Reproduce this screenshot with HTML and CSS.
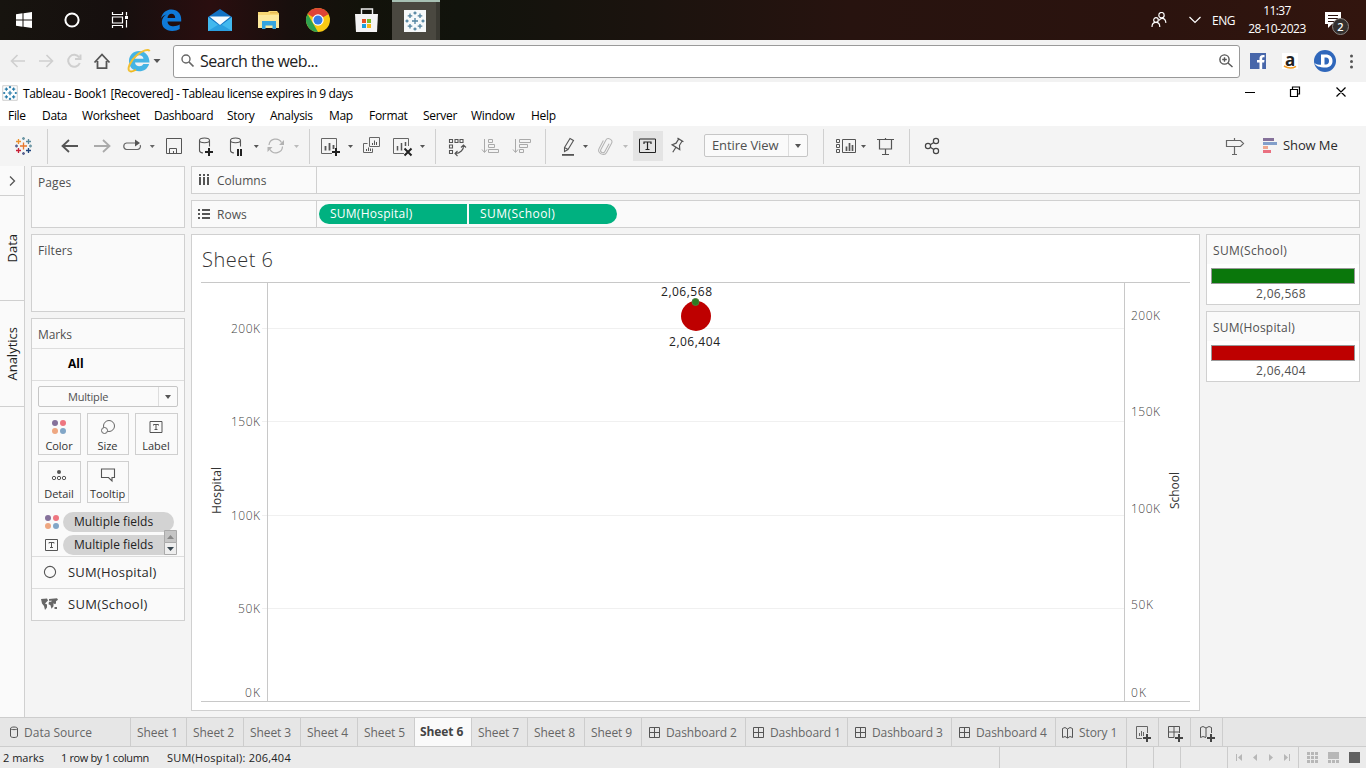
FILE: index.html
```html
<!DOCTYPE html>
<html lang="en">
<head>
<meta charset="utf-8">
<title>Tableau - Book1</title>
<link rel="stylesheet" href="styles.css">
</head>
<body>
<svg class="defs" width="0" height="0">
  <defs>
    <g id="spark"><path d="M0-3V3M-3 0H3M0-9.500V-6.500M-1.500-8H1.500M0 6.500V9.500M-1.500 8H1.500M-9.500 0H-6.500M-8-1.500V1.500M6.500 0H9.500M8-1.500V1.500M-5-7.500V-3M-7.300-5.200H-2.700M5-7.500V-3M2.700-5.200H7.300M-5 3V7.500M-7.300 5.200H-2.700M5 3V7.500M2.700 5.200H7.300"/></g>
    <g id="grid"><path d="M.5.5h10v10H.5zM5.500.5v10M.5 5.500h10" fill="none" stroke="#555"/></g>
    <g id="book"><path d="M.5 1.500 3 .5 5.500 2 8 .5l2.500 1v9L8 9.500 5.500 11 3 9.500.5 10.500zM5.500 2v9" fill="none" stroke="#555"/></g>
    <g id="dots4"><circle cx="-4" cy="-4" r="3" fill="#85719a"/><circle cx="4" cy="-4" r="3" fill="#ee7680"/><circle cx="-4" cy="4" r="3" fill="#eea781"/><circle cx="4" cy="4" r="3" fill="#82a6c7"/></g>
    <g id="tbox" fill="none" stroke="#555"><path d="M-6.500-5.500H5.500V5.500H-6.500zM-3-1.500V-2.500H2V-1.500M-.5-2.500V2.500M-2 2.500H1"/></g>
  </defs>
</svg>

<header class="taskbar">
  <svg width="392" height="40" viewBox="0 0 392 40">
    <path fill="#fff" d="M16 14.300 22.500 13.300V19.500H16zM23.500 13.200 32 12V19.500H23.500zM16 20.500H22.500V26.700L16 25.700zM23.500 20.500H32V28L23.500 26.800z"/>
    <circle cx="72" cy="20" r="6.600" fill="none" stroke="#fff" stroke-width="2"/>
    <path fill="none" stroke="#fff" stroke-width="1.200" d="M112.500 12v2.500h10V12M112.500 28v-2.500h10V28M112.500 17h10v6h-10zM126.500 12v3.500M126.500 20v7.500"/><path d="M125 16h3v3h-3z" fill="#fff"/>
    <path fill="#0f7ad8" d="M161 18.500C162.500 12 167 9.500 171.500 9.500c5.500 0 9.700 4 9.700 9.500v2.500H167.500c.2 3.300 3 4.800 6 4.800 2.300 0 4.500-.6 6.200-1.700V29c-2 1.200-4.500 1.900-7.500 1.900-6.500 0-10.700-3.900-10.300-9.400.3-3 2-5.700 5-7.200-2.500.6-4.600 2.200-5.900 4.200zM167.500 18h7.700c0-2.600-1.300-4.200-3.700-4.200-2.300 0-3.800 1.800-4 4.200z"/>
    <path fill="#1272c4" d="M208 17 220 9l12 8v14h-24z"/><path fill="#f5fbff" d="M209.500 16.500h21L220 25z"/><path fill="#42b8ee" d="M208 17l12 9 12-9v14h-24z"/><path fill="#2b9fe0" d="M208 31 218.500 24.500 220 26l1.500-1.500L232 31z"/>
    <path fill="#f8d775" d="M258 12h10l1-1h8l2 2.500V28h-21z"/><path fill="#e8bb55" d="M270 12h8v1.500h-8z"/><path fill="#fde89d" d="M258 15h21v13h-21z"/><path fill="#37a5df" d="M262 21h14v8h-3.500v-3.500h-7V29H262z"/>
    <circle cx="318" cy="20" r="12" fill="#f8c913"/><path fill="#dd4436" d="M318 20 307.600 14a12 12 0 0 1 20.800 0z"/><path fill="#dd4436" d="M318 14h10.400L318 20z"/><path fill="#2fa24f" d="M307.600 14 318 32a12 12 0 0 1-10.400-18z"/><circle cx="318" cy="20" r="5.700" fill="#fff"/><circle cx="318" cy="20" r="4.500" fill="#337de5"/>
    <path fill="none" stroke="#ededed" stroke-width="1.400" d="M361.500 15V9h11v6"/><path fill="#f3f3f3" d="M355 14h23l-1 18h-21z"/><path fill="#e65124" d="M362 19h4v4h-4z"/><path fill="#78b82a" d="M367 19h4v4h-4z"/><path fill="#18a0de" d="M362 24h4v4h-4z"/><path fill="#f6b713" d="M367 24h4v4h-4z"/>
  </svg>
  <div class="active-app"><svg width="22" height="22" viewBox="-11 -11 22 22"><path fill="#f6f9fa" d="M-11-11h22v22h-22z"/><use href="#spark" stroke="#4f829f" stroke-width="1.300"/></svg></div>
  <div class="tray">
    <svg class="people" width="16" height="16" viewBox="0 0 16 16" fill="none" stroke="#fff" stroke-width="1.200"><circle cx="5" cy="8" r="2.300"/><path d="M1 15c0-3 1.500-4.600 4-4.600s3.800 1.600 3.800 4.600"/><circle cx="10.500" cy="3.200" r="2.700"/><path d="M8 8.500c.8-1.600 1.700-2.200 3-2.200 2.300 0 3.700 1.700 3.900 4.600"/></svg>
    <svg class="chev" width="12" height="8" viewBox="0 0 12 8"><path d="M.5 1 6 6.500 11.500 1" fill="none" stroke="#fff" stroke-width="1.200"/></svg>
    <span class="lang">ENG</span>
    <div class="clock"><span class="time">11:37</span><span class="date">28-10-2023</span></div>
    <div class="notif"><svg width="18" height="17" viewBox="0 0 18 17"><path fill="#fff" d="M1 1h16v12H8l-4 4v-4H1z"/><path stroke="#29120e" d="M4 4.500h10M4 7.500h10M4 10.500h7"/></svg><span class="badge">2</span></div>
  </div>
</header>

<div class="browserbar">
  <svg width="173" height="42" viewBox="0 40 173 42">
    <g fill="none" stroke="#cfcfcf" stroke-width="1.600"><path d="M25 61H12M17.500 55 11.500 61l6 6M39 61h13M46.500 55l6 6-6 6"/><path stroke-width="2" d="M79.200 57.500a6 6 0 1 0 .6 5.500M80.500 54.500v4.500H75"/></g>
    <path fill="none" stroke="#555" stroke-width="1.800" d="M94.500 62.500 102 54.500l7.500 8M97.500 61v7.200H106.500V61"/>
    <path fill="#45b4e4" d="M129 61c0-6 4.500-10 10-10 6 0 10.500 4.500 10.500 11.500H135c.3 2.500 2 3.700 4.300 3.700 2 0 3.200-.7 4-2.200h5.800c-1.500 4.700-5 7.300-10 7.300-6 0-10.100-4.300-10.100-10.300zM135 58.800h8.500c-.3-2.200-1.800-3.500-4.200-3.500s-4 1.300-4.300 3.500z"/>
    <path d="M129.500 71c-2.500-2 .5-10 7-15.500 6-5.300 12.500-7 13-4.300" fill="none" stroke="#f2c033" stroke-width="2"/><path d="M129.500 71c1.500 1 4 .3 6.500-1.200" fill="none" stroke="#efb91d" stroke-width="1.800"/>
    <path d="M153.500 59h7l-3.500 4z" fill="#555"/>
  </svg>
  <div class="search">
    <svg width="14" height="14" viewBox="0 0 14 14"><circle cx="5" cy="5" r="4" fill="none" stroke="#666" stroke-width="1.400"/><path d="M8 8l4.500 4.500" stroke="#666" stroke-width="1.700"/></svg>
    <span class="search-text">Search the web...</span>
    <svg class="zoomer" width="14" height="14" viewBox="0 0 14 14"><circle cx="5.500" cy="5.500" r="4.600" fill="none" stroke="#555" stroke-width="1.400"/><path d="M9 9l4.500 4M3.200 5.500h4.600M5.500 3.200v4.600" stroke="#555" stroke-width="1.400"/></svg>
  </div>
  <svg width="126" height="42" viewBox="1240 40 126 42">
    <path fill="#4867aa" d="M1250 53h16v16h-16z"/><path fill="#fff" d="M1259.500 69v-6.500H1257V60h2.500v-1.500c0-2.700 1.500-4 5-3.500v2.300c-1.800-.1-2.300.2-2.300 1.400V60h2.300l-.4 2.500h-1.900V69z"/>
    <path fill="#fff" d="M1282 53h16v16h-16z"/><text x="1285" y="66" class="amz">a</text><path d="M1284 66c4 2.500 8.500 2.500 12 .3" fill="none" stroke="#f49b20" stroke-width="1.500"/>
    <circle cx="1325" cy="61" r="11" fill="#2f67bb"/><path fill="#fff" d="M1321 54.500h4.500c4.500 0 7 2.500 7 6.500s-2.700 6.500-7 6.500c-6 0-10-1.500-11-4.500 2 1.500 4 1.700 6.500 1.700z"/><path fill="#2f67bb" d="M1324.500 57.500h1.500c2 0 3 1.300 3 3.500s-1.200 3.600-3 3.600h-1.500z"/>
    <g fill="#555"><circle cx="1351.500" cy="56" r="1.500"/><circle cx="1351.500" cy="61.500" r="1.500"/><circle cx="1351.500" cy="67" r="1.500"/></g>
  </svg>
</div>

<div class="titlebar">
  <svg width="16" height="16" viewBox="-11 -11 22 22"><path fill="#fff" stroke="#bbb" d="M-10-10h20v20h-20z"/><use href="#spark" stroke="#287ba8" stroke-width="1.700"/></svg>
  <span class="title">Tableau - Book1 [Recovered] - Tableau license expires in 9 days</span>
  <svg class="winctl" width="116" height="22" viewBox="1240 82 116 22" fill="none" stroke="#000" stroke-width="1.200"><path d="M1245 92.500h10M1290.500 89.500h7v7h-7zM1292.500 89v-2h7v7H1298M1336.500 87.500l9 9M1345.500 87.500l-9 9"/></svg>
</div>
<nav class="menu"><span class="m1">File</span><span class="m2">Data</span><span class="m3">Worksheet</span><span class="m4">Dashboard</span><span class="m5">Story</span><span class="m6">Analysis</span><span class="m7">Map</span><span class="m8">Format</span><span class="m9">Server</span><span class="m10">Window</span><span class="m11">Help</span></nav>

<div class="toolbar">
  <svg width="47" height="41" viewBox="0 0 47 41" fill="none" stroke-width="1.300"><path stroke="#e8762c" d="M23.500 16.500v7M20 20h7"/><path stroke="#eb912c" d="M18.500 13v5M16 15.500h5"/><path stroke="#59879b" d="M28.500 13v5M26 15.500h5"/><path stroke="#c72037" d="M18.500 22v5M16 24.500h5"/><path stroke="#1f457e" d="M28.500 22v5M26 24.500h5"/><path stroke="#7099a6" d="M23.500 11v3M22 12.500h3M30.500 18.500v3M29 20h3"/><path stroke="#5b6591" d="M23.500 26v3M22 27.500h3M16.500 18.500v3M15 20h3"/></svg>
  <i class="sep"></i>
  <svg width="40" height="41" viewBox="48 0 40 41"><path d="M78 20H63M69 14l-6.500 6 6.500 6" fill="none" stroke="#555" stroke-width="1.800"/></svg>
  <svg width="30" height="41" viewBox="88 0 30 41"><path d="M94 20h15M103 14l6.500 6-6.500 6" fill="none" stroke="#aaa" stroke-width="1.800"/></svg>
  <svg width="28" height="41" viewBox="118 0 28 41"><path d="M131 23.500h-4.500a3.300 3.300 0 0 1 0-6.500H137M130 23.500h7a3.200 3.200 0 0 0 3.200-4.500" fill="none" stroke="#666" stroke-width="1.200"/><path fill="#555" d="M135 13.500l5 3.500-5 3.500z"/></svg>
  <svg width="14" height="41" viewBox="146 0 14 41"><path fill="#666" d="M149.800 19h5l-2.500 3z"/></svg>
  <svg width="30" height="41" viewBox="160 0 30 41"><path d="M166.500 12.500h15v15h-15zM169.500 27v-4.500h7V27M173.500 25v2.500" fill="none" stroke="#555"/></svg>
  <svg width="30" height="41" viewBox="190 0 30 41"><path d="M199.500 14.500c0-3.300 10-3.300 10 0v6M199.500 14.500c0 3 10 3 10 0M199.500 14.500v10c0 1.500 1.500 2.300 3.500 2.500" fill="none" stroke="#555" stroke-width="1.100"/><path stroke="#222" stroke-width="2" d="M209 22v8M205 26h8"/></svg>
  <svg width="30" height="41" viewBox="220 0 30 41"><path d="M230.500 14.500c0-3.300 10-3.300 10 0v6M230.500 14.500c0 3 10 3 10 0M230.500 14.500v10c0 1.500 1.500 2.300 3.500 2.500" fill="none" stroke="#555" stroke-width="1.100"/><path stroke="#222" stroke-width="2" d="M238 23v7M241 23v7"/></svg>
  <svg width="14" height="41" viewBox="250 0 14 41"><path fill="#555" d="M253.800 19h5l-2.500 3z"/></svg>
  <svg width="26" height="41" viewBox="264 0 26 41"><path d="M269 19a6.700 6.700 0 0 1 12.500-2.500M282.500 20.500A6.700 6.700 0 0 1 270 23.500" fill="none" stroke="#b2b2b2" stroke-width="1.200"/><path fill="#b2b2b2" d="M284 14v5h-5zM267.500 26v-5h5z"/></svg>
  <svg width="19" height="41" viewBox="290 0 19 41"><path fill="#bbb" d="M294 19h5l-2.500 3z"/></svg>
  <i class="sep"></i>
  <svg width="34" height="41" viewBox="310 0 34 41"><path d="M332 27.500h-10.500v-15h15V22" fill="none" stroke="#666"/><path d="M325.500 20v4.500M329.500 17v7.500M333.500 19v4" stroke="#555" stroke-width="1.800"/><path stroke="#222" stroke-width="2" d="M336 22v8M332 26h8"/></svg>
  <svg width="14" height="41" viewBox="344 0 14 41"><path fill="#555" d="M348 19h5l-2.500 3z"/></svg>
  <svg width="28" height="41" viewBox="358 0 28 41"><path d="M369.500 11.500h10v9h-10zM367.500 17.500h-4v9h9v-4" fill="none" stroke="#666"/><path d="M372.500 17v2M374.500 14.500V19M376.500 16v3M366.500 23v2M368.500 21.500V25M370.500 22.500V25" stroke="#555"/></svg>
  <svg width="30" height="41" viewBox="386 0 30 41"><path d="M404 27.500h-10.500v-15h15V20" fill="none" stroke="#666"/><path d="M397.500 20v4.500M401.500 17v7.500M405.500 16v4" stroke="#555" stroke-width="1.500"/><path stroke="#222" stroke-width="2" d="M404.500 22.500l7 7M411.500 22.500l-7 7"/></svg>
  <svg width="19" height="41" viewBox="416 0 19 41"><path fill="#555" d="M420 19h5l-2.500 3z"/></svg>
  <i class="sep"></i>
  <svg width="36" height="41" viewBox="436 0 36 41"><path d="M449.500 13.500h3v3h-3zM455 13.500h3v3h-3zM460 13.500h3v3h-3zM449.500 19h3v3h-3zM449.500 24.500h3v3h-3zM463.500 19.500c.5 4-3.500 8-8 8M461 21.500l2.500-2.500 2.500 2.500M457.500 25l-2.500 2.500 2.500 2.500" fill="none" stroke="#555" stroke-width="1.100"/></svg>
  <svg width="34" height="41" viewBox="472 0 34 41"><path d="M484.500 13v13M482 23.500l2.500 3 2.500-3M488.500 13.500h4v3h-4zM488.500 18.500h6v3h-6zM488.500 23.500h10v3h-10z" fill="none" stroke="#aaa"/></svg>
  <svg width="39" height="41" viewBox="506 0 39 41"><path d="M515.500 13v13M513 23.500l2.500 3 2.500-3M519.500 13.500h11v3h-11zM519.500 18.500h8v3h-8zM519.500 23.500h4v3h-4z" fill="none" stroke="#aaa"/></svg>
  <i class="sep"></i>
  <svg width="32" height="41" viewBox="546 0 32 41"><path d="M564.500 21.500l5.500-9 3.500 2-5.500 9-3.500 2zM564.500 21.500l3.500 2" fill="none" stroke="#555" stroke-width="1.100"/><path fill="#555" d="M562 28h12v1.800h-12z"/></svg>
  <svg width="14" height="41" viewBox="578 0 14 41"><path fill="#555" d="M583 19h5l-2.500 3z"/></svg>
  <svg width="26" height="41" viewBox="592 0 26 41"><path transform="rotate(28 605 20)" d="M607.500 16v9c0 3-4.500 3-4.500 0V14.500c0-4 6.500-4 6.500 0V25c0 5-8.500 5-8.500 0v-9" fill="none" stroke="#b2b2b2"/></svg>
  <svg width="15" height="41" viewBox="618 0 15 41"><path fill="#bbb" d="M623 19h5l-2.500 3z"/></svg>
  <span class="toggled"><svg width="30" height="30" viewBox="633 0 30 30"><path d="M639.500 8h16v13.500h-16z" fill="none" stroke="#222"/><path d="M644 13v-2h7v2M647.500 11v7.500M645.500 18.500h4" fill="none" stroke="#222" stroke-width="1.200"/></svg></span>
  <svg width="41" height="41" viewBox="663 0 41 41"><path transform="rotate(32 677 19.500)" d="M673.500 13h7M675 13v5l-2.500 3.500h9L679 18v-5M677 21.500v6" fill="none" stroke="#555" stroke-width="1.200"/></svg>
  <div class="combo fit"><span>Entire View</span><b></b></div>
  <i class="sep s3"></i>
  <svg width="33" height="41" viewBox="824 0 33 41"><path d="M836.500 13.500h3v3h-3zM836.500 18.500h3v3h-3zM836.500 23.500h3v3h-3zM842.500 13.500h13v13h-13z" fill="none" stroke="#555"/><path d="M846.500 20.500V25M849.500 17v8M852.500 19v6" stroke="#555" stroke-width="1.700"/></svg>
  <svg width="13" height="41" viewBox="857 0 13 41"><path fill="#555" d="M861 19h5l-2.500 3z"/></svg>
  <svg width="39" height="41" viewBox="870 0 39 41"><path d="M877 13.500h17M879.500 14v9h12v-9M885.500 12v2M885.500 23v5M882 28.500h7" fill="none" stroke="#555" stroke-width="1.200"/></svg>
  <i class="sep"></i>
  <svg width="50" height="41" viewBox="910 0 50 41" fill="none" stroke="#444" stroke-width="1.200"><circle cx="928" cy="20" r="2.600"/><circle cx="936" cy="15" r="2.600"/><circle cx="936" cy="25" r="2.600"/><path d="M930.300 18.700l3.500-2.300M930.300 21.300l3.500 2.300"/></svg>
  <div class="showme"><svg width="30" height="41" viewBox="1220 0 30 41"><path d="M1226.500 14.500h14l3 3-3 3h-14zM1234.500 12v2.500M1234.500 20.500v8M1232 28.500h5" fill="none" stroke="#666" stroke-width="1.200"/></svg><svg width="33" height="41" viewBox="1250 0 33 41"><path fill="#85719a" d="M1263 12h11v3h-11z"/><path fill="#829fca" d="M1263 16h14v3h-14z"/><path fill="#eea78e" d="M1263 20h5v3h-5z"/><path fill="#ea7080" d="M1263 24h8v3h-8z"/></svg><span>Show Me</span></div>
</div>

<main class="workspace">
  <aside class="side">
    <div class="side-toggle"><svg width="24" height="29" viewBox="0 0 24 29"><path d="M10 10.500l4.500 4.500-4.500 4.500" fill="none" stroke="#555" stroke-width="1.300"/></svg></div>
    <div class="side-tab data"><span>Data</span></div>
    <div class="side-tab analytics"><span>Analytics</span></div>
  </aside>
  <section class="cards">
    <div class="card pages"><h3>Pages</h3></div>
    <div class="card filters"><h3>Filters</h3></div>
    <div class="card marks">
      <h3>Marks</h3>
      <div class="all">All</div>
      <div class="encodings">
        <div class="combo type"><span>Multiple</span><b></b></div>
        <div class="buttons">
          <div class="btn"><svg width="20" height="20" viewBox="-9 -10 20 20"><use href="#dots4"/></svg><span>Color</span></div>
          <div class="btn"><svg width="20" height="20" viewBox="-10 -10 20 20" fill="#fafafa" stroke="#666"><circle cx="1" cy="-1" r="5.500"/><circle cx="-3.500" cy="3.500" r="3"/></svg><span>Size</span></div>
          <div class="btn"><svg width="20" height="20" viewBox="-9.500 -10 20 20"><use href="#tbox"/></svg><span>Label</span></div>
          <div class="btn"><svg width="20" height="20" viewBox="-9 -10 20 20"><circle cy="-3" r="2" fill="#555"/><g fill="none" stroke="#555"><circle cx="-5" cy="3" r="1.700"/><circle cy="3" r="1.700"/><circle cx="5" cy="3" r="1.700"/></g></svg><span>Detail</span></div>
          <div class="btn"><svg width="20" height="20" viewBox="-10 -10 20 20"><path d="M-6.500-6h13v8.500H4V6L.5 2.500h-7z" fill="none" stroke="#555" stroke-width="1.100"/></svg><span>Tooltip</span></div>
        </div>
        <div class="fields">
          <div class="field"><svg width="24" height="20" viewBox="-13 -10 24 20"><use href="#dots4"/></svg><span class="graypill">Multiple fields</span></div>
          <div class="field"><svg width="24" height="20" viewBox="-13 -10 24 20"><use href="#tbox"/></svg><span class="graypill cut">Multiple fields</span></div>
          <div class="spin"><svg width="13" height="25" viewBox="0 0 13 25"><path d="M.5.500h12v12H.5z" fill="#c5c5c5" stroke="#aaa"/><path d="M.5 12.500h12v12H.5z" fill="#eee" stroke="#aaa"/><path d="M3 9l3.500-4 3.500 4z" fill="#888"/><path d="M3 17l3.500 4 3.500-4z" fill="#38464f"/></svg></div>
        </div>
      </div>
      <div class="layer"><svg width="36" height="31" viewBox="32 0 36 31"><circle cx="50" cy="15" r="5.600" fill="none" stroke="#555" stroke-width="1.100"/></svg><span>SUM(Hospital)</span></div>
      <div class="layer"><svg width="36" height="31" viewBox="32 0 36 31"><path fill="#666" d="M41 10l6-.5 1 2-3 3 2 1v3l-2 2.500-1-4-2-2.500zM49 10l8-.8 1 1.500-2 1.500v2l-1 1-1.500-1v3l-2 2.500-1-3.500-2-1 .5-2.500h2l1-1h-3zM54.500 18h2.500v2h-2.500z"/></svg><span class="school">SUM(School)</span></div>
    </div>
  </section>
  <div class="center">
    <div class="shelf"><div class="shelf-name"><svg width="18" height="26" viewBox="192 0 18 26"><path fill="#555" d="M199 7h2v2h-2zM203 7h2v2h-2zM207 7h2v2h-2zM199 10h2v8h-2zM203 10h2v8h-2zM207 10h2v8h-2z"/></svg><span class="n1">Columns</span></div></div>
    <div class="shelf"><div class="shelf-name"><svg width="18" height="26" viewBox="192 0 18 26"><path fill="#555" d="M198 8h2v2h-2zM198 12h2v2h-2zM198 16h2v2h-2zM202 8h8v2h-8zM202 12h8v2h-8zM202 16h8v2h-8z"/></svg><span class="n2">Rows</span></div><span class="pill first">SUM(Hospital)</span><span class="pill last">SUM(School)</span></div>
    <div class="lower">
      <div class="view">
        <svg width="1007" height="475" viewBox="192 235 1007 475">
          <g stroke="#f0f0f0"><path d="M262 328.500H1124M262 421.500H1124M262 515.500H1124M262 608.500H1124"/></g>
          <path d="M201 282.500H1190M201 701.500H1190M267.500 283V701M1124.500 283V701" stroke="#c8c8c8"/>
          <text x="202" y="267" class="sheet" textLength="71">Sheet 6</text>
          <g class="tick"><text x="231" y="333" textLength="29">200K</text><text x="231" y="426" textLength="29">150K</text><text x="231" y="520" textLength="29">100K</text><text x="238" y="613" textLength="22">50K</text><text x="245" y="697" textLength="15">0K</text>
          <text x="1131" y="320" textLength="29">200K</text><text x="1131" y="416" textLength="29">150K</text><text x="1131" y="513" textLength="29">100K</text><text x="1131" y="609" textLength="22">50K</text><text x="1131" y="697" textLength="15">0K</text></g>
          <text class="axis" transform="translate(221 514) rotate(-90)" textLength="47">Hospital</text>
          <text class="axis" transform="translate(1179 509) rotate(-90)" textLength="37">School</text>
          <circle cx="696" cy="316" r="15" fill="#be0000"/><circle cx="695.500" cy="302" r="3.500" fill="#2c7c22" stroke="#4c7f3a"/>
          <text class="val" x="661" y="296" textLength="51">2,06,568</text><text class="val" x="669" y="346" textLength="51">2,06,404</text>
        </svg>
      </div>
      <aside class="legends">
        <div class="legend"><h3>SUM(School)</h3><div class="ramp green"></div><p>2,06,568</p></div>
        <div class="legend"><h3 class="hosp">SUM(Hospital)</h3><div class="ramp red"></div><p>2,06,404</p></div>
      </aside>
    </div>
  </div>
</main>

<nav class="tabs">
  <div class="tab src"><svg width="24" height="29" viewBox="0 0 24 29"><path d="M10.500 10.500c0-2 7-2 7 0v7.500c0 2-7 2-7 0zM10.500 10.500c0 1.500 7 1.500 7 0" fill="none" stroke="#555"/></svg><span>Data Source</span></div>
  <div class="tab w56">Sheet 1</div><div class="tab w57">Sheet 2</div><div class="tab w57">Sheet 3</div><div class="tab w57">Sheet 4</div><div class="tab w57">Sheet 5</div><div class="tab w57 on">Sheet 6</div><div class="tab w56">Sheet 7</div><div class="tab w57">Sheet 8</div><div class="tab w57">Sheet 9</div>
  <div class="tab w104"><svg width="11" height="11"><use href="#grid"/></svg><span>Dashboard 2</span></div>
  <div class="tab w102"><svg width="11" height="11"><use href="#grid"/></svg><span>Dashboard 1</span></div>
  <div class="tab w104"><svg width="11" height="11"><use href="#grid"/></svg><span>Dashboard 3</span></div>
  <div class="tab w104"><svg width="11" height="11"><use href="#grid"/></svg><span>Dashboard 4</span></div>
  <div class="tab story"><svg width="11" height="12"><use href="#book"/></svg><span>Story 1</span></div>
  <div class="tab add"><svg width="17" height="17"><path d="M7 13.500H1.500V1.500h11V8" fill="none" stroke="#666"/><path d="M4.500 8v3M6.500 6v5M8.500 7v4" stroke="#666"/><path d="M12 9v8M8 13h8" stroke="#444" stroke-width="2"/></svg></div>
  <div class="tab add"><svg width="17" height="17"><path d="M7 12.500H1.500V1.500h11V8M7 1.500v11M1.500 7h11" fill="none" stroke="#555"/><path d="M12 9v8M8 13h8" stroke="#444" stroke-width="2"/></svg></div>
  <div class="tab add"><svg width="17" height="17"><path d="M7 12.500 4 11.500l-2.500 1v-10L4 1.500 7 3l3-1.500 2.500 1V8M7 3v9" fill="none" stroke="#555"/><path d="M12 9v8M8 13h8" stroke="#444" stroke-width="2"/></svg></div>
</nav>
<footer class="status">
  <span class="st1">2 marks</span><span class="st2">1 row by 1 column</span><span class="st3">SUM(Hospital): 206,404</span>
  <svg width="367" height="21" viewBox="999 747 367 21"><path d="M999.500 747v21M1126.500 747v21M1153.500 747v21M1180.500 747v21M1227.500 747v21M1298.500 747v21" stroke="#ccc"/><path fill="#b7b7b7" d="M1236 754h1v7h-1zM1242 754v7l-4-3.500zM1257 754v7l-4-3.500zM1269 754v7l4-3.500zM1284 754v7l4-3.500zM1289 754h1v7h-1zM1307 752h3v3h-3zM1311 752h3v3h-3zM1315 752h3v3h-3zM1307 756h3v3h-3zM1311 756h3v3h-3zM1315 756h3v3h-3zM1307 760h3v3h-3zM1311 760h3v3h-3zM1315 760h3v3h-3zM1328 752h11v7h-11zM1328 760h3v3h-3zM1332 760h3v3h-3zM1336 760h3v3h-3z"/><path fill="#606060" d="M1349 752h11v11h-11z"/></svg>
</footer>
</body>
</html>
```
FILE: styles.css
```css
* { box-sizing: border-box; }
body { margin: 0; width: 1366px; height: 768px; overflow: hidden; background: #f4f4f4; font-family: "Open Sans", "Noto Sans", sans-serif; font-size: 12px; color: #505050; display: flex; flex-direction: column; white-space: nowrap; }
svg { display: block; flex: none; }
.defs { position: absolute; }
h3, p { margin: 0; font-weight: 400; font-size: 12px; }

.taskbar { height: 40px; flex: none; display: flex; background: linear-gradient(90deg, #17140f 0, #160f0e 120px, #2a0e0f 210px, #180f0d 290px, #12120a 360px, #11130c 460px, #1b130e 650px, #27130f 850px, #2b130e 1150px, #32150e 1366px); color: #fff; }
.active-app { width: 48px; height: 40px; background: #4a4840; border-top: 2px solid #a7c0b3; display: flex; align-items: center; padding-left: 12px; box-shadow: inset -4px 0 #3a3932; }
.tray { margin-left: auto; display: flex; width: 215px; height: 40px; align-items: center; }
.chev { margin-left: 22px; }
.lang { margin-left: 11px; width: 25px; letter-spacing: -0.5px; }
.clock { width: 60px; margin-left: 10px; display: flex; flex-direction: column; align-items: center; line-height: 18px; padding-bottom: 1px; }
.time { letter-spacing: -0.6px; }
.date { letter-spacing: -0.5px; }
.notif { position: relative; margin-left: 17px; width: 26px; height: 18px; }
.badge { position: absolute; left: 8px; top: 7px; width: 17px; height: 17px; border-radius: 50%; background: #34302e; border: 1px solid #8c8683; font-size: 11px; line-height: 15px; text-align: center; font-weight: 600; }

.browserbar { height: 42px; flex: none; display: flex; background: #f2f2f2; align-items: center; }
.search { width: 1067px; height: 33px; background: #fff; border: 1px solid #999; border-radius: 3px; display: flex; align-items: center; padding: 0 6px 0 7px; }
.search-text { margin-left: 5px; font-size: 16px; color: #222; letter-spacing: -0.55px; line-height: 22px; margin-top: -1px; }
.zoomer { margin-left: auto; }
.amz { font: bold 17px "Open Sans", sans-serif; fill: #222; }

.titlebar { height: 22px; flex: none; display: flex; align-items: center; background: #fff; padding-left: 2px; color: #000; }
.title { margin-left: 5px; letter-spacing: -0.35px; }
.winctl { margin-left: auto; margin-right: 10px; }
.menu { height: 22px; flex: none; display: flex; background: #fff; padding-left: 8px; color: #000; line-height: 23px; letter-spacing: -0.3px; }
.m1 { width: 34px; } .m2 { width: 40px; } .m3 { width: 72px; } .m4 { width: 73px; } .m5 { width: 43px; } .m6 { width: 59px; } .m7 { width: 40px; } .m8 { width: 54px; } .m9 { width: 48px; } .m10 { width: 60px; }

.toolbar { height: 40px; flex: none; display: flex; background: #f4f4f4; }
.sep { width: 1px; height: 35px; margin-top: 3px; background: #d0d0d0; flex: none; }
.s3 { margin-left: 15px; }
.toggled { width: 30px; height: 30px; margin-top: 5px; background: #e4e4e4; }
.combo { display: flex; border: 1px solid #c6c6c6; border-radius: 2px; background: #fafafa; }
.combo b { width: 19px; border-left: 1px solid #ddd; margin-left: auto; display: flex; align-items: center; justify-content: center; }
.combo b::after { content: ""; border: 3.5px solid transparent; border-top: 4px solid #555; border-bottom: 0; }
.fit { width: 104px; height: 23px; margin-top: 8px; padding-left: 7px; font-size: 13px; line-height: 21px; color: #505050; letter-spacing: -.1px; }
.showme { margin-left: auto; width: 146px; display: flex; font-size: 13px; line-height: 39px; color: #2a2a2a; letter-spacing: -.1px; }

.workspace { height: 551px; flex: none; display: flex; }
.side { width: 25px; background: #fafafa; border-right: 1px solid #d0d0d0; margin-right: 6px; color: #222; }
.side-toggle { height: 30px; border-bottom: 1px solid #d0d0d0; }
.side-tab { border-bottom: 1px solid #d0d0d0; display: flex; align-items: center; justify-content: center; font-size: 13px; }
.side-tab span { writing-mode: vertical-rl; transform: rotate(180deg); }
.data { height: 105px; } .analytics { height: 106px; }

.cards { width: 154px; margin-right: 6px; display: flex; flex-direction: column; gap: 6px; }
.card { background: #fafafa; border: 1px solid #d0d0d0; }
.card h3 { padding-left: 6px; height: 30px; line-height: 31px; letter-spacing: .1px; }
.pages { height: 62px; } .filters { height: 78px; } .marks { height: 303px; }
.marks h3 { height: 29px; letter-spacing: -.1px; }
.all { height: 33px; border: solid #ddd; border-width: 1px 0; padding-left: 36px; line-height: 29px; font-weight: 700; font-size: 12px; color: #000; }
.encodings { height: 175px; padding: 5px 6px 0; }
.type { width: 140px; height: 21px; padding-left: 29px; line-height: 20px; font-size: 11px; letter-spacing: -.2px; }
.buttons { margin-top: 6px; width: 140px; display: grid; grid-template-columns: 43px 42px 43px; gap: 6px; }
.btn { height: 42px; border: 1px solid #cfcfcf; display: flex; flex-direction: column; align-items: center; padding-top: 3px; font-size: 11px; line-height: 18px; color: #333; }
.btn span { letter-spacing: -.05px; padding-right: 1px; }
.fields { position: relative; margin-top: 9px; display: flex; flex-direction: column; gap: 3px; }
.field { display: flex; margin-left: 1px; height: 20px; width: 139px; }
.graypill { width: 111px; height: 20px; background: #d3d3d3; border-radius: 10px; padding-left: 11px; line-height: 20px; color: #222; font-size: 12px; letter-spacing: .04px; }
.cut { border-radius: 10px 0 0 10px; }
.spin { position: absolute; left: 126px; top: 18px; }
.layer { height: 32px; border-top: 1px solid #ddd; display: flex; line-height: 31px; font-size: 13px; color: #2a2a2a; letter-spacing: .2px; }
.school { letter-spacing: .32px; }

.center { width: 1169px; display: flex; flex-direction: column; gap: 6px; }
.shelf { height: 28px; border: 1px solid #d0d0d0; background: #fafafa; display: flex; align-items: center; }
.shelf-name { width: 125px; height: 26px; border-right: 1px solid #d0d0d0; display: flex; line-height: 27px; margin-right: 2px; }
.shelf-name span { margin-left: 7px; }
.pill { height: 20px; background: #00b180; color: #fff; line-height: 20px; padding-left: 11px; width: 148px; letter-spacing: .25px; }
.first { border-radius: 10px 0 0 10px; margin-right: 2px; }
.last { border-radius: 0 10px 10px 0; letter-spacing: .45px; }
.lower { display: flex; gap: 6px; align-items: flex-start; }
.view { width: 1009px; height: 477px; background: #fff; border: 1px solid #d0d0d0; }
.sheet { font: 300 20px "Open Sans", sans-serif; fill: #333; }
.tick { font: 300 12px "Open Sans", sans-serif; fill: #444; }
.axis { font: 500 12px "Open Sans", sans-serif; fill: #333; }
.val { font: 12px "Open Sans", sans-serif; fill: #222; }
.legends { width: 154px; display: flex; flex-direction: column; gap: 6px; }
.legend { height: 71px; background: #fff; border: 1px solid #d0d0d0; text-align: center; }
.legend h3 { height: 29px; line-height: 31px; background: #fafafa; text-align: left; padding-left: 6px; letter-spacing: .35px; }
.legend .hosp { letter-spacing: .2px; }
.ramp { height: 16px; margin: 4px 4px 0; border: 1px solid #999; }
.green { background: #0a770b; } .red { background: #be0000; }
.legend p { line-height: 19px; padding-right: 4px; letter-spacing: .3px; }

.tabs { height: 30px; flex: none; display: flex; background: #e6e6e6; border: solid #cdcdcd; border-width: 1px 0; color: #666; }
.tab { border-right: 1px solid #cdcdcd; display: flex; align-items: center; padding: 1px 0 0 6px; line-height: 28px; flex: none; letter-spacing: -.1px; }
.tab > svg { margin-right: 6px; }
.src { width: 131px; padding: 1px 0 0; letter-spacing: 0; } .src > svg { margin: 0; }
.w56 { width: 56px; } .w57 { width: 57px; } .w102 { width: 102px; } .w104 { width: 104px; } .story { width: 71px; }
.w102, .w104 { padding-left: 7px; }
.add { width: 32px; padding: 3px 0 0 8px; }
.on { background: #fafafa; font-weight: 700; color: #444; padding-left: 5px; padding-bottom: 1px; }
.status { height: 21px; flex: none; display: flex; background: #ebebeb; color: #222; font-size: 11px; line-height: 22px; padding-left: 3px; }
.st1 { width: 58px; } .st2 { width: 106px; letter-spacing: -.37px; } .st3 { letter-spacing: .22px; }
.status svg { margin-left: auto; }
```
